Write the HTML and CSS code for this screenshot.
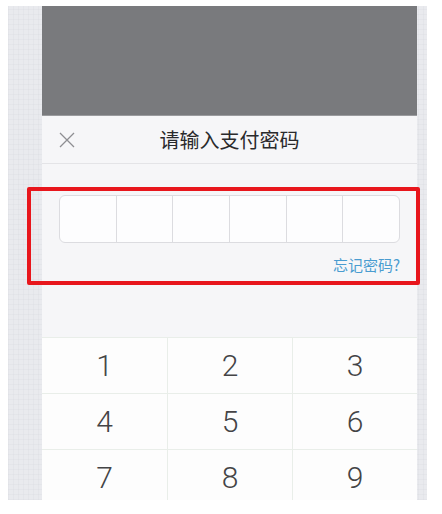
FILE: index.html
```html
<!DOCTYPE html>
<html lang="zh-CN">
  <head>
    <meta charset="UTF-8" />
    <meta name="viewport" content="width=device-width, initial-scale=1.0" />
    <title>请输入支付密码</title>
    <link rel="stylesheet" href="styles.css">
  </head>
  <body>
    <div class="frame">
      <div class="phone">
        <div class="mask"></div>
        <div class="sheet">
          <div class="header">
            <svg class="close" width="16" height="16" viewBox="0 0 16 16">
              <path d="M1 1L15 15M15 1L1 15" stroke="#8e8e92" stroke-width="1.3" fill="none" />
            </svg>
            <span class="title">请输入支付密码</span>
          </div>
          <div class="pay">
            <div class="pwd">
              <div class="cell"></div>
              <div class="cell"></div>
              <div class="cell"></div>
              <div class="cell"></div>
              <div class="cell"></div>
              <div class="cell"></div>
            </div>
            <div class="forgot">忘记密码?</div>
          </div>
          <div class="keypad">
            <div class="key">1</div>
            <div class="key">2</div>
            <div class="key">3</div>
            <div class="key">4</div>
            <div class="key">5</div>
            <div class="key">6</div>
            <div class="key">7</div>
            <div class="key">8</div>
            <div class="key">9</div>
          </div>
        </div>
      </div>
      <div class="mark"></div>
    </div>
  </body>
</html>
```

FILE: styles.css
```css
body {
  margin: 0;
  padding: 0;
  background-color: #ffffff;
  font-family: "Noto Sans CJK SC", "Noto Sans", sans-serif;
}
.frame {
  position: relative;
  margin: 6px 0 0 8px;
  width: 419px;
  height: 494px;
  padding: 0 10px 0 34px;
  box-sizing: border-box;
  overflow: hidden;
  background-color: #e9eaee;
  background-image:
    repeating-linear-gradient(0deg, rgba(205, 207, 214, 0.18) 0 1px, transparent 1px 5px),
    repeating-linear-gradient(90deg, rgba(205, 207, 214, 0.18) 0 1px, transparent 1px 5px);
}
.phone {
  width: 375px;
  height: 494px;
  display: flex;
  flex-direction: column;
}
.mask {
  height: 109px;
  flex: none;
  background-color: #797a7d;
  border-bottom: 1px solid #9a9b9e;
}
.sheet {
  flex: 1;
  background-color: #f6f6f8;
  display: flex;
  flex-direction: column;
}
.header {
  position: relative;
  height: 47px;
  flex: none;
  display: flex;
  align-items: center;
  justify-content: center;
  border-bottom: 1px solid #e4e4e7;
}
.close {
  position: absolute;
  left: 17px;
  top: 16px;
}
.title {
  font-size: 20px;
  color: #2a2a2c;
}
.pay {
  padding: 31px 17px 0 17px;
  height: 173px;
  flex: none;
  box-sizing: border-box;
}
.pwd {
  height: 48px;
  display: flex;
  border: 1px solid #dcdce0;
  border-radius: 6px;
  background-color: #fdfdfe;
  box-sizing: border-box;
}
.cell {
  flex: 1;
  border-left: 1px solid #dcdce0;
}
.cell:first-child {
  border-left: none;
}
.forgot {
  margin-top: 11px;
  text-align: right;
  font-size: 15px;
  color: #4a9cd0;
}
.keypad {
  display: grid;
  grid-template-columns: 125px 125px 125px;
  grid-auto-rows: 56px;
  border-top: 1px solid #e9eee9;
  background-color: #fdfdfd;
}
.key {
  display: flex;
  align-items: center;
  justify-content: center;
  font-family: Roboto, "Liberation Sans", sans-serif;
  font-weight: 300;
  font-size: 30px;
  color: #444446;
  border-bottom: 1px solid #e9eee9;
  border-left: 1px solid #e9eee9;
}
.key:nth-child(3n + 1) {
  border-left: none;
}
.mark {
  position: absolute;
  left: 19px;
  top: 181px;
  width: 393px;
  height: 98px;
  box-sizing: border-box;
  border: 4px solid #e8161c;
  border-radius: 2px;
}
```
